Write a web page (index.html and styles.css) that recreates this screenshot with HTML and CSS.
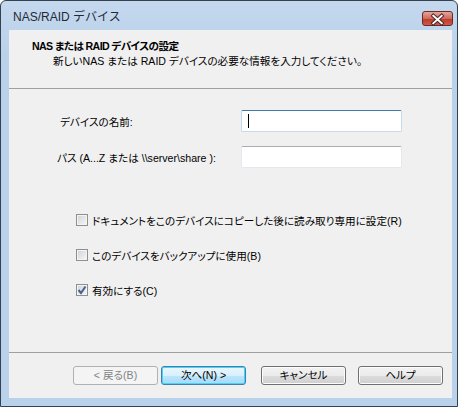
FILE: index.html
```html
<!DOCTYPE html>
<html>
<head>
  <meta charset="UTF-8">
  <title>NAS/RAID デバイス</title>
  <link rel="stylesheet" href="styles.css">
</head>
<body>
  <div class="window">
    <div class="titlebar">
      <span class="title">NAS/RAID デバイス</span>
      <span class="close">
        <svg width="31" height="15" viewBox="0 0 31 15">
          <path d="M11 3.5 L20 11.5 M20 3.5 L11 11.5" stroke="#4a2a28" stroke-width="4" stroke-linecap="square"/>
          <path d="M11 3.5 L20 11.5 M20 3.5 L11 11.5" stroke="#ffffff" stroke-width="2" stroke-linecap="square"/>
        </svg>
      </span>
    </div>

    <div class="content">
      <div class="header">
        <div class="header-title">NAS または RAID デバイスの設定</div>
        <div class="header-sub">新しいNAS または RAID デバイスの必要な情報を入力してください。</div>
      </div>

      <div class="main">
        <div class="fields">
          <label>デバイスの名前:</label>
          <div class="input focused"><span class="caret"></span></div>
          <label class="path-label">パス (A...Z または \\server\share ):</label>
          <div class="input"></div>
        </div>

        <div class="checks">
          <div class="check-row">
            <span class="box"></span>
            <span>ドキュメントをこのデバイスにコピーした後に読み取り専用に設定(R)</span>
          </div>
          <div class="check-row">
            <span class="box"></span>
            <span>このデバイスをバックアップに使用(B)</span>
          </div>
          <div class="check-row">
            <span class="box">
              <svg width="10" height="10" viewBox="0 0 10 10">
                <path d="M1.5 5 L4 8 L8.5 1.5" stroke="#4a5f91" stroke-width="2" fill="none"/>
              </svg>
            </span>
            <span>有効にする(C)</span>
          </div>
        </div>
      </div>

      <div class="footer">
        <button class="btn disabled">&lt; 戻る(B)</button>
        <button class="btn default">次へ(N) &gt;</button>
        <button class="btn cancel">キャンセル</button>
        <button class="btn help">ヘルプ</button>
      </div>
    </div>
  </div>
</body>
</html>
```

FILE: styles.css
```css
body {
  margin: 0;
  width: 458px;
  height: 407px;
  background: #ffffff;
  font-family: "Liberation Sans", "Noto Sans CJK JP", sans-serif;
  font-size: 11px;
  color: #000;
}
.window {
  height: 407px;
  box-sizing: border-box;
  border: 1px solid #34414f;
  border-radius: 6px 6px 0 0;
  background: linear-gradient(#c4d8ee, #b9d1ea 60px);
  padding: 0 5px 8px 8px;
  display: flex;
  flex-direction: column;
}
.titlebar {
  height: 29px;
  display: flex;
  align-items: center;
}
.title {
  padding-left: 4px;
  font-size: 12px;
  color: #1e2a36;
}
.close {
  margin-left: auto;
  margin-right: -1px;
  align-self: flex-start;
  margin-top: 10px;
  width: 31px;
  height: 15px;
  box-sizing: border-box;
  border: 1px solid #6b2a24;
  border-radius: 3px;
  background: linear-gradient(#e6a49c, #d06a5c 50%, #bb3a2a 51%, #cf5a45);
  display: flex;
}
.content {
  flex: 1;
  background: #f0f0f0;
  display: flex;
  flex-direction: column;
  font-size: 10.6px;
  font-feature-settings: "palt";
}
.header {
  height: 59px;
  box-sizing: border-box;
  border-bottom: 1px solid #a0a0a0;
  padding: 9px 0 0 23px;
  line-height: 15px;
}
.header-title {
  font-weight: bold;
  letter-spacing: -0.6px;
}
.header-sub {
  padding-left: 21px;
}
.main {
  flex: 1;
}
.fields {
  display: grid;
  grid-template-columns: 181px 161px;
  row-gap: 14px;
  padding: 21px 0 0 51px;
  align-items: center;
}
.path-label {
  margin-left: -3px;
}
.input {
  height: 22px;
  box-sizing: border-box;
  background: #fff;
  border: 1px solid #e3e9ef;
  border-top-color: #abadb3;
  border-radius: 2px;
  position: relative;
}
.input.focused {
  border-color: #c5daed;
  border-top-color: #3d7bad;
}
.caret {
  position: absolute;
  left: 6px;
  top: 3px;
  width: 1px;
  height: 14px;
  background: #000;
}
.checks {
  padding: 45px 0 0 67px;
  display: flex;
  flex-direction: column;
  gap: 21px;
}
.check-row {
  height: 14px;
  display: flex;
  align-items: center;
  gap: 4px;
}
.box {
  width: 12px;
  height: 12px;
  box-sizing: border-box;
  border: 1px solid #8e8f8f;
  background: linear-gradient(135deg, #cfd2d6, #f7f7f7);
  box-shadow: inset 0 0 0 1px #f4f4f4;
  display: flex;
  align-items: center;
  justify-content: center;
}
.footer {
  height: 46px;
  box-sizing: border-box;
  border-top: 1px solid #a0a0a0;
  padding: 13px 0 0 64px;
  display: flex;
  align-items: flex-start;
}
.btn {
  width: 85px;
  height: 19px;
  padding: 0;
  font-family: inherit;
  font-size: 10.6px;
  font-feature-settings: "palt";
  line-height: 15px;
  border: 1px solid #707070;
  border-radius: 3px;
  background: linear-gradient(#f2f2f2, #ebebeb 50%, #dddddd 51%, #cfcfcf);
  box-shadow: inset 0 0 0 1px #fcfcfc;
  color: #000;
}
.btn.disabled {
  border-color: #adb2b5;
  background: #f4f4f4;
  box-shadow: none;
  color: #838383;
}
.btn.default {
  margin-left: 3px;
  border-color: #3c7fb1;
  background: linear-gradient(#eaf6fd, #d9f0fc 50%, #bee6fd 51%, #a7d9f5);
  box-shadow: inset 0 0 0 1px #48d4f8;
}
.btn.cancel {
  margin-left: 15px;
}
.btn.help {
  margin-left: 12px;
}
```
